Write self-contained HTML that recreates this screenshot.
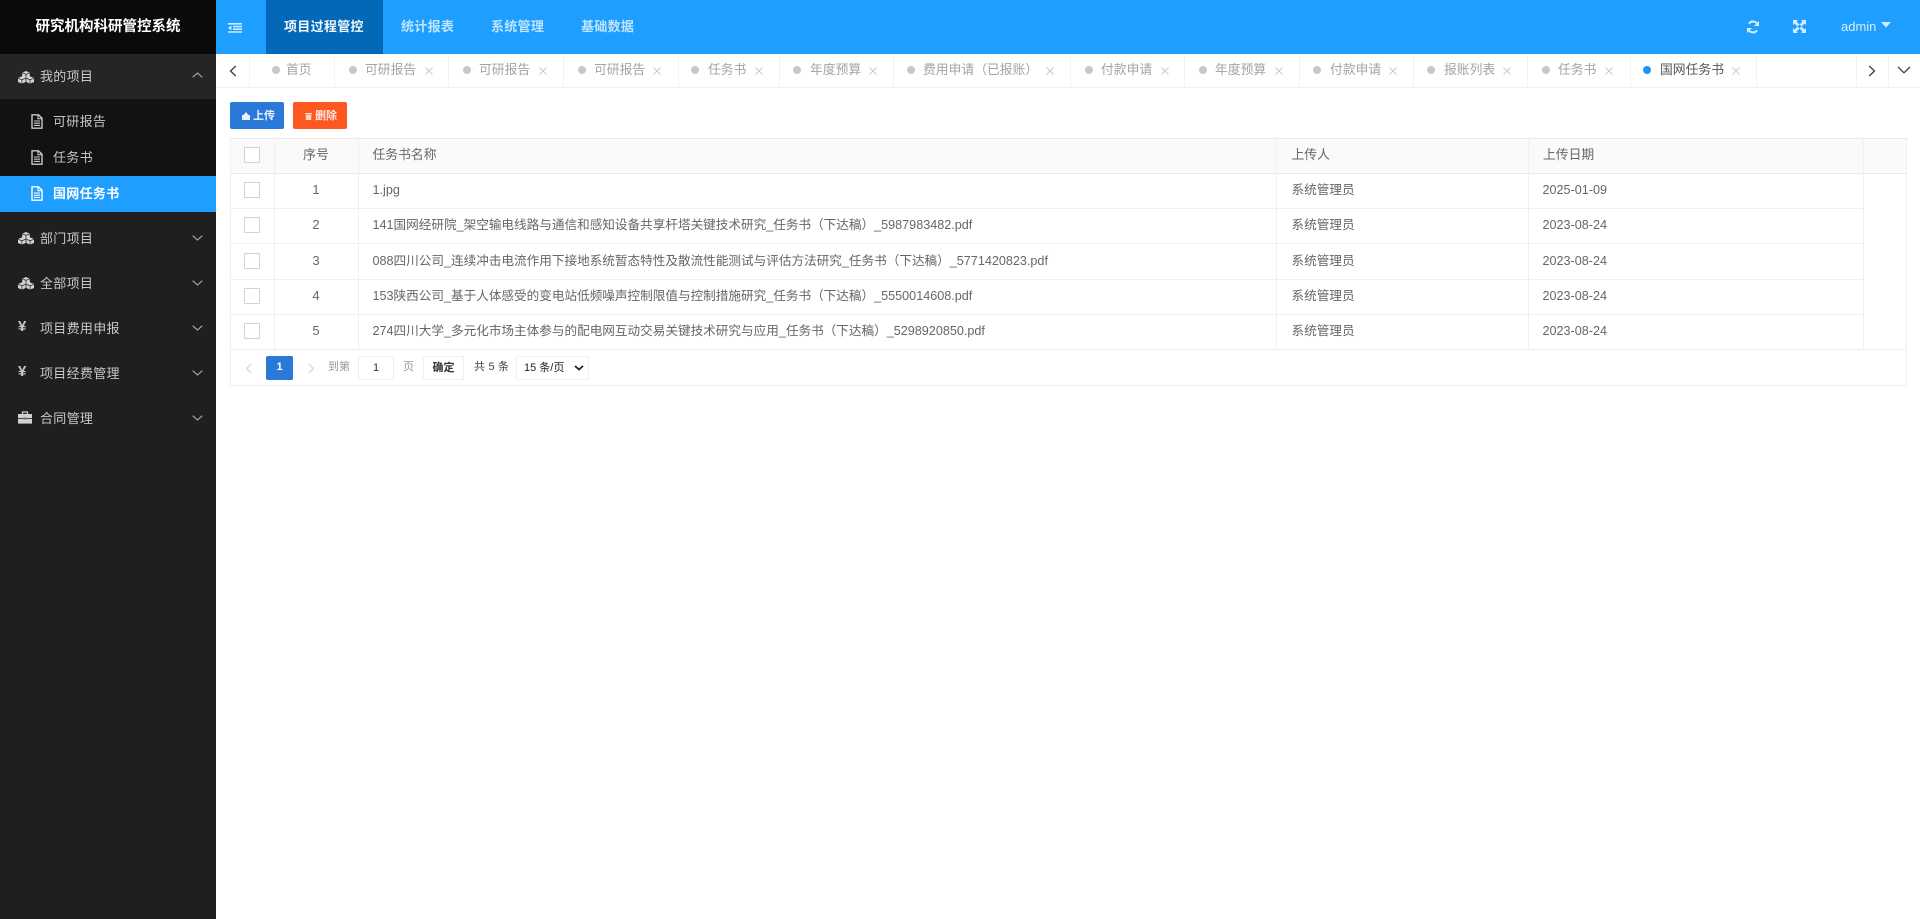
<!DOCTYPE html>
<html lang="zh-CN">
<head>
<meta charset="utf-8">
<title>研究机构科研管控系统</title>
<style>
*{box-sizing:border-box}
html,body{margin:0;padding:0;width:1920px;height:919px;overflow:hidden;background:#fff;font-family:"Liberation Sans","Noto Sans CJK SC",sans-serif;font-size:13px;color:#555}
.a{position:absolute;white-space:nowrap}
svg{position:absolute;display:block}
#side{left:0;top:0;width:216px;height:919px;background:#1f1f1f}
#logo{left:0;top:0;width:216px;height:54px;background:#0a0a0a;color:#fff;font-weight:700;font-size:14.5px;line-height:54px;text-align:center}
#top{left:216px;top:0;width:1704px;height:54px;background:#1e9fff}
.nav{top:0;height:54px;line-height:53px;font-size:13px;font-weight:700;color:rgba(255,255,255,.72);letter-spacing:.3px}
.mi{left:40px;color:#c9c9c9;font-size:13px;line-height:20px;letter-spacing:.3px}
.sub{left:53px;color:#c4c4c4;font-size:13px;line-height:20px;letter-spacing:.3px}
.tabl{top:54px;width:1px;height:34px;background:#f2f2f2}
.dot{top:66px;width:8px;height:8px;border-radius:50%;background:#c8c8c8}
.tt{top:60px;line-height:20px;font-size:12.8px;color:#a3a3a3}
.x{top:64px;width:10px;height:14px}
.hl{height:1px;background:#e9e9e9}
.vl{width:1px;background:#f0f0f0}
.cb{left:244px;width:16px;height:16px;border:1px solid #d2d2d2;background:#fff;border-radius:1px}
.n{left:274px;width:84px;text-align:center;line-height:20px;font-size:13px;color:#666}
.c{line-height:20px;font-size:12.62px;color:#666}
.pg{border:1px solid #f0f0f0;background:#fff;border-radius:2px}
</style>
</head>
<body>
<div id="side" class="a"></div>
<div id="logo" class="a">研究机构科研管控系统</div>
<div class="a" style="left:0;top:54px;width:216px;height:45px;background:#252525"></div>
<div class="a" style="left:0;top:99px;width:216px;height:113px;background:#121212"></div>
<div class="a" style="left:0;top:176px;width:216px;height:36px;background:#1e9fff"></div>

<svg width="0" height="0" style="position:absolute"><defs>
<g id="cubes"><path d="M8 0L11.8 1.6V6L8 7.5L4.2 6V1.6Z M0 7L3.9 5.4L7.6 7V11L3.9 12.6L0 11Z M8.4 7L12.1 5.4L16 7V11L12.1 12.6L8.4 11Z" fill="#d4d4d4"/><path d="M4.2 1.8L8 3.4L11.8 1.8M8 3.4V7.4M0 7.2L3.9 8.8L7.6 7.2M3.9 8.8V12.5M8.4 7.2L12.1 8.8L16 7.2M12.1 8.8V12.5" fill="none" stroke="#333" stroke-width=".8"/></g>
<g id="file"><path d="M1 .8H7.5L11 4.2V14.2H1Z" fill="none" stroke="currentColor" stroke-width="1.4"/><path d="M7 1V4.7H10.7M3 7H9M3 9.2H9M3 11.4H9" fill="none" stroke="currentColor" stroke-width="1.1"/></g>
<g id="down"><path d="M.7 .7L5.5 5L10.3 .7" fill="none" stroke="#aaa" stroke-width="1.1"/></g>
<g id="cx"><path d="M1.5 3.5L8.5 10.5M8.5 3.5L1.5 10.5" stroke="#c9c9c9" stroke-width="1"/></g>
</defs></svg>

<!-- sidebar menu -->
<svg style="left:18px;top:71px" width="16" height="13"><use href="#cubes"/></svg>
<div class="a mi" style="top:67px">我的项目</div>
<svg style="left:192px;top:72px" width="11" height="6"><path d="M.7 5.3L5.5 1L10.3 5.3" fill="none" stroke="#aaa" stroke-width="1.1"/></svg>

<svg style="left:31px;top:114px;color:#c8c8c8" width="12" height="15"><use href="#file"/></svg>
<div class="a sub" style="top:112px">可研报告</div>
<svg style="left:31px;top:150px;color:#c8c8c8" width="12" height="15"><use href="#file"/></svg>
<div class="a sub" style="top:148px">任务书</div>
<svg style="left:31px;top:186px;color:#fff" width="12" height="15"><use href="#file"/></svg>
<div class="a sub" style="top:184px;color:#fff;font-weight:700">国网任务书</div>

<svg style="left:18px;top:232px" width="16" height="13"><use href="#cubes"/></svg>
<div class="a mi" style="top:229px">部门项目</div>
<svg style="left:192px;top:235px" width="11" height="6"><use href="#down"/></svg>

<svg style="left:18px;top:277px" width="16" height="13"><use href="#cubes"/></svg>
<div class="a mi" style="top:274px">全部项目</div>
<svg style="left:192px;top:280px" width="11" height="6"><use href="#down"/></svg>

<div class="a" style="left:18px;top:317px;font-size:15px;line-height:20px;font-weight:700;color:#c9c9c9">¥</div>
<div class="a mi" style="top:319px">项目费用申报</div>
<svg style="left:192px;top:325px" width="11" height="6"><use href="#down"/></svg>

<div class="a" style="left:18px;top:362px;font-size:15px;line-height:20px;font-weight:700;color:#c9c9c9">¥</div>
<div class="a mi" style="top:364px">项目经费管理</div>
<svg style="left:192px;top:370px" width="11" height="6"><use href="#down"/></svg>

<svg style="left:18px;top:411px" width="14" height="13"><path d="M4.5 3V1H9.5V3" fill="none" stroke="#d0d0d0" stroke-width="1.2"/><rect x="0" y="3" width="14" height="4.2" fill="#d0d0d0"/><rect x="0" y="8" width="14" height="4.6" fill="#d0d0d0"/><rect x="5.7" y="6.4" width="2.6" height="2.2" fill="#777"/></svg>
<div class="a mi" style="top:409px">合同管理</div>
<svg style="left:192px;top:415px" width="11" height="6"><use href="#down"/></svg>

<!-- top bar -->
<div id="top" class="a"></div>
<div class="a" style="left:266px;top:0;width:117px;height:54px;background:#0268b8"></div>
<svg style="left:228px;top:23px" width="15" height="10"><path d="M0 0H14V1.6H0Z M5 2.8H14V4.4H5Z M5 5.4H14V7H5Z M0 8.2H14V9.8H0Z" fill="#cfeaff"/><path d="M3.4 2.6V7.2L0 4.9Z" fill="#cfeaff"/></svg>
<div class="a nav" style="left:284px;color:#f2f8fc">项目过程管控</div>
<div class="a nav" style="left:401px">统计报表</div>
<div class="a nav" style="left:491px">系统管理</div>
<div class="a nav" style="left:581px">基础数据</div>
<svg style="left:1746px;top:20px" width="14" height="14" viewBox="0 0 14 14"><path d="M12.2 5.6A5.3 5.3 0 0 0 2.9 3.6M1.8 8.4A5.3 5.3 0 0 0 11.1 10.4" fill="none" stroke="#d3edff" stroke-width="2"/><path d="M13 1V6H8Z M1 13V8H6Z" fill="#d3edff"/></svg>
<svg style="left:1793px;top:20px" width="13" height="13" viewBox="0 0 13 13"><path d="M0 0H5L3.5 1.5L6.5 4.5L4.5 6.5L1.5 3.5L0 5Z M13 0V5L11.5 3.5L8.5 6.5L6.5 4.5L9.5 1.5L8 0Z M0 13V8L1.5 9.5L4.5 6.5L6.5 8.5L3.5 11.5L5 13Z M13 13H8L9.5 11.5L6.5 8.5L8.5 6.5L11.5 9.5L13 8Z" fill="#d3edff"/></svg>
<div class="a" style="left:1841px;top:17px;line-height:20px;font-size:13px;color:#d3edff">admin</div>
<svg style="left:1881px;top:22px" width="10" height="6"><path d="M0 0H10L5 5.5Z" fill="#d3edff"/></svg>

<!-- tabs -->
<div class="a" style="left:216px;top:87px;width:1704px;height:1px;background:#f0f0f0"></div>
<svg style="left:229px;top:65px" width="8" height="12"><path d="M6.8 1L1.5 6L6.8 11" fill="none" stroke="#444" stroke-width="1.4"/></svg>
<div class="a tabl" style="left:249px"></div>
<div class="a tabl" style="left:334px"></div>
<div class="a tabl" style="left:448px"></div>
<div class="a tabl" style="left:563px"></div>
<div class="a tabl" style="left:678px"></div>
<div class="a tabl" style="left:779px"></div>
<div class="a tabl" style="left:893px"></div>
<div class="a tabl" style="left:1070px"></div>
<div class="a tabl" style="left:1184px"></div>
<div class="a tabl" style="left:1299px"></div>
<div class="a tabl" style="left:1413px"></div>
<div class="a tabl" style="left:1527px"></div>
<div class="a tabl" style="left:1630px"></div>
<div class="a tabl" style="left:1756px"></div>
<div class="a tabl" style="left:1856px"></div>
<div class="a tabl" style="left:1888px"></div>

<div class="a dot" style="left:272px"></div><div class="a tt" style="left:286px">首页</div>
<div class="a dot" style="left:349px"></div><div class="a tt" style="left:365px">可研报告</div><svg class="x" style="left:424px"><use href="#cx"/></svg>
<div class="a dot" style="left:463px"></div><div class="a tt" style="left:479px">可研报告</div><svg class="x" style="left:538px"><use href="#cx"/></svg>
<div class="a dot" style="left:578px"></div><div class="a tt" style="left:594px">可研报告</div><svg class="x" style="left:652px"><use href="#cx"/></svg>
<div class="a dot" style="left:691px"></div><div class="a tt" style="left:708px">任务书</div><svg class="x" style="left:754px"><use href="#cx"/></svg>
<div class="a dot" style="left:793px"></div><div class="a tt" style="left:810px">年度预算</div><svg class="x" style="left:868px"><use href="#cx"/></svg>
<div class="a dot" style="left:907px"></div><div class="a tt" style="left:923px">费用申请（已报账）</div><svg class="x" style="left:1045px"><use href="#cx"/></svg>
<div class="a dot" style="left:1085px"></div><div class="a tt" style="left:1101px">付款申请</div><svg class="x" style="left:1160px"><use href="#cx"/></svg>
<div class="a dot" style="left:1199px"></div><div class="a tt" style="left:1215px">年度预算</div><svg class="x" style="left:1274px"><use href="#cx"/></svg>
<div class="a dot" style="left:1313px"></div><div class="a tt" style="left:1330px">付款申请</div><svg class="x" style="left:1388px"><use href="#cx"/></svg>
<div class="a dot" style="left:1427px"></div><div class="a tt" style="left:1444px">报账列表</div><svg class="x" style="left:1502px"><use href="#cx"/></svg>
<div class="a dot" style="left:1542px"></div><div class="a tt" style="left:1558px">任务书</div><svg class="x" style="left:1604px"><use href="#cx"/></svg>
<div class="a dot" style="left:1643px;background:#1e96ee"></div><div class="a tt" style="left:1660px;color:#555">国网任务书</div><svg class="x" style="left:1731px"><use href="#cx"/></svg>
<svg style="left:1868px;top:65px" width="8" height="12"><path d="M1.2 1L6.5 6L1.2 11" fill="none" stroke="#444" stroke-width="1.4"/></svg>
<svg style="left:1897px;top:66px" width="14" height="8"><path d="M1 1L7 6.8L13 1" fill="none" stroke="#444" stroke-width="1.3"/></svg>

<!-- buttons -->
<div class="a" style="left:230px;top:102px;width:54px;height:27px;background:#2a78d8;border-radius:2px"></div>
<svg style="left:242px;top:112px" width="8" height="8"><path d="M4 0L6.5 3H8V8H0V3H1.5Z" fill="#e8f2ff"/></svg>
<div class="a" style="left:253px;top:107px;line-height:19px;font-size:11px;font-weight:700;color:#eaf3ff">上传</div>
<div class="a" style="left:293px;top:102px;width:54px;height:27px;background:#ff5722;border-radius:2px"></div>
<svg style="left:305px;top:112px" width="7" height="8"><path d="M0 1H7V2.4H0Z M.8 3H6.2V8H.8Z" fill="#ffd8cb"/></svg>
<div class="a" style="left:315px;top:107px;line-height:19px;font-size:11px;font-weight:700;color:#ffe5dc">删除</div>

<!-- table -->
<div class="a" style="left:230px;top:138px;width:1677px;height:35px;background:#fafafa"></div>
<div class="a hl" style="left:230px;top:138px;width:1677px"></div>
<div class="a hl" style="left:230px;top:173px;width:1677px"></div>
<div class="a hl" style="left:230px;top:208px;width:1633px;background:#efefef"></div>
<div class="a hl" style="left:230px;top:243px;width:1633px;background:#efefef"></div>
<div class="a hl" style="left:230px;top:279px;width:1633px;background:#efefef"></div>
<div class="a hl" style="left:230px;top:314px;width:1633px;background:#efefef"></div>
<div class="a hl" style="left:230px;top:349px;width:1677px;background:#efefef"></div>
<div class="a hl" style="left:230px;top:385px;width:1677px;background:#efefef"></div>
<div class="a vl" style="left:230px;top:138px;height:248px"></div>
<div class="a vl" style="left:274px;top:138px;height:211px"></div>
<div class="a vl" style="left:358px;top:138px;height:211px"></div>
<div class="a vl" style="left:1276px;top:138px;height:211px"></div>
<div class="a vl" style="left:1528px;top:138px;height:211px"></div>
<div class="a vl" style="left:1863px;top:138px;height:211px"></div>
<div class="a vl" style="left:1906px;top:138px;height:248px"></div>

<div class="a cb" style="top:147px"></div>
<div class="a cb" style="top:182px"></div>
<div class="a cb" style="top:217px"></div>
<div class="a cb" style="top:253px"></div>
<div class="a cb" style="top:288px"></div>
<div class="a cb" style="top:323px"></div>

<div class="a n" style="top:145px">序号</div>
<div class="a c" style="left:372.5px;top:145px;font-size:12.8px">任务书名称</div>
<div class="a c" style="left:1291.5px;top:145px;font-size:12.8px">上传人</div>
<div class="a c" style="left:1543px;top:145px;font-size:12.8px">上传日期</div>

<div class="a n" style="top:180px">1</div>
<div class="a c" style="left:372.5px;top:180px">1.jpg</div>
<div class="a c" style="left:1291.5px;top:180px">系统管理员</div>
<div class="a c" style="left:1542.5px;top:180px">2025-01-09</div>

<div class="a n" style="top:215px">2</div>
<div class="a c" style="left:372.5px;top:215px">141国网经研院_架空输电线路与通信和感知设备共享杆塔关键技术研究_任务书（下达稿）_5987983482.pdf</div>
<div class="a c" style="left:1291.5px;top:215px">系统管理员</div>
<div class="a c" style="left:1542.5px;top:215px">2023-08-24</div>

<div class="a n" style="top:251px">3</div>
<div class="a c" style="left:372.5px;top:251px">088四川公司_连续冲击电流作用下接地系统暂态特性及散流性能测试与评估方法研究_任务书（下达稿）_5771420823.pdf</div>
<div class="a c" style="left:1291.5px;top:251px">系统管理员</div>
<div class="a c" style="left:1542.5px;top:251px">2023-08-24</div>

<div class="a n" style="top:286px">4</div>
<div class="a c" style="left:372.5px;top:286px">153陕西公司_基于人体感受的变电站低频噪声控制限值与控制措施研究_任务书（下达稿）_5550014608.pdf</div>
<div class="a c" style="left:1291.5px;top:286px">系统管理员</div>
<div class="a c" style="left:1542.5px;top:286px">2023-08-24</div>

<div class="a n" style="top:321px">5</div>
<div class="a c" style="left:372.5px;top:321px">274四川大学_多元化市场主体参与的配电网互动交易关键技术研究与应用_任务书（下达稿）_5298920850.pdf</div>
<div class="a c" style="left:1291.5px;top:321px">系统管理员</div>
<div class="a c" style="left:1542.5px;top:321px">2023-08-24</div>

<!-- pagination -->
<svg style="left:245px;top:363px" width="8" height="11"><path d="M6.5 .8L1.5 5.5L6.5 10.2" fill="none" stroke="#d8d8d8" stroke-width="1.3"/></svg>
<div class="a" style="left:266px;top:356px;width:27px;height:24px;background:#2a78d8;border-radius:2px;color:#fff;font-weight:700;font-size:11px;line-height:23px;text-align:center">1</div>
<svg style="left:307px;top:363px" width="8" height="11"><path d="M1.5 .8L6.5 5.5L1.5 10.2" fill="none" stroke="#d8d8d8" stroke-width="1.3"/></svg>
<div class="a" style="left:328px;top:357px;line-height:20px;font-size:11px;color:#999">到第</div>
<div class="a pg" style="left:358px;top:356px;width:36px;height:24px;text-align:center;line-height:23px;font-size:11px;color:#333">1</div>
<div class="a" style="left:403px;top:357px;line-height:20px;font-size:11px;color:#999">页</div>
<div class="a pg" style="left:423px;top:356px;width:41px;height:24px;text-align:center;line-height:23px;font-size:11px;font-weight:700;color:#333">确定</div>
<div class="a" style="left:474px;top:357px;line-height:20px;font-size:11px;color:#444;letter-spacing:.2px">共 5 条</div>
<div class="a pg" style="left:516px;top:356px;width:73px;height:24px;line-height:23px;font-size:11px;color:#222;padding-left:7px">15 条/页</div>
<svg style="left:574px;top:365px" width="10" height="6"><path d="M1 1L5 4.5L9 1" fill="none" stroke="#222" stroke-width="1.8"/></svg>
</body>
</html>
